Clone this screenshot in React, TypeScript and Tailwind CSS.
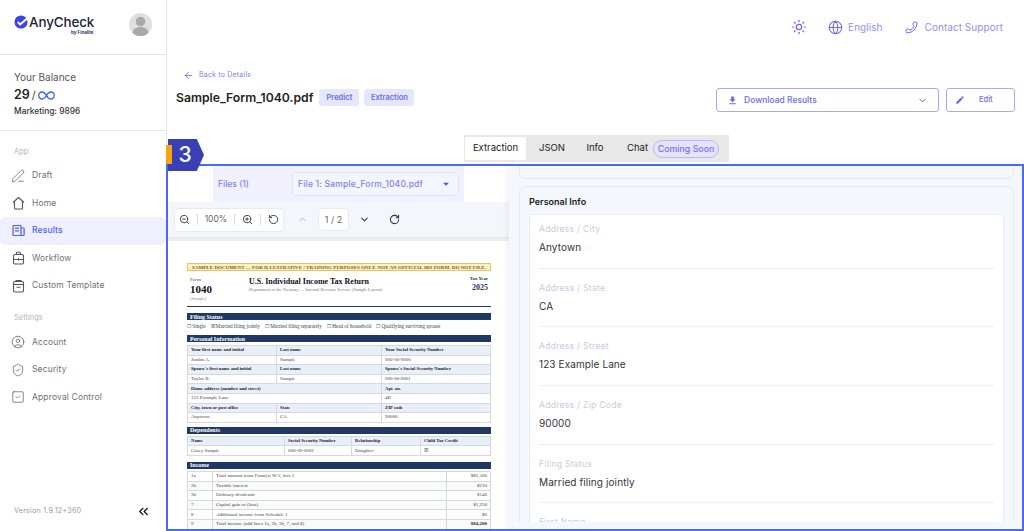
import React from "react";
import { PenLine, CircleUser, ShieldCheck, SquareCheck, Sun, Globe, Phone, ArrowLeft, ChevronDown, ChevronUp, ZoomIn, ZoomOut, RotateCcw, RotateCw, ChevronsLeft } from "lucide-react";
import { MdFileDownload, MdEdit, MdArrowDropDown } from "react-icons/md";

function ResultsIcon() {
  return (
    <svg width="13" height="13" viewBox="0 0 13 13" fill="none" stroke="#4f5cf5" strokeWidth="1.2">
      <rect x="1" y="1.500" width="8" height="10" rx="0.800" />
      <path d="M9 4h2.300a.8.8 0 0 1 .8.8v5.900a.8.8 0 0 1-.8.8H9" />
      <path d="M3 4.200h4M3 6.800h4" />
    </svg>
  );
}
function HomeIcon() {
  return (
    <svg width="13" height="14" viewBox="0 0 13 14" fill="none" stroke="#555" strokeWidth="1.100" strokeLinejoin="round">
      <path d="M1 6.500 6.500 1.500 12 6.500M2.500 5.500v6.700a.8.8 0 0 0 .8.8h6.400a.8.8 0 0 0 .8-.8V5.500" />
    </svg>
  );
}
function WorkflowIcon() {
  return (
    <svg width="13" height="14" viewBox="0 0 13 14" fill="none" stroke="#555" strokeWidth="1.100">
      <rect x="1.500" y="3.500" width="10" height="9.500" rx="1.500" />
      <path d="M4.500 3.500V2.200a1 1 0 0 1 1-1h2a1 1 0 0 1 1 1v1.300M1.500 8.500h10M6.500 7v2.500" />
    </svg>
  );
}
function TemplateIcon() {
  return (
    <svg width="13" height="14" viewBox="0 0 13 14" fill="none" stroke="#555" strokeWidth="1.100">
      <rect x="1.500" y="2.500" width="10" height="10.500" rx="1.500" />
      <path d="M1.500 5.500h10M4 2.500V1.500h5v1M4.500 8.200h4" />
    </svg>
  );
}

function NavItem({ icon, label, active }: { icon: React.ReactNode; label: string; active?: boolean }) {
  return (
    <div className={"flex h-[27.500px] items-center gap-[7px] pl-[11px] text-[8.500px] tracking-[0.15px] " + (active ? "rounded-md bg-[#eeefff] font-medium text-[#4f5cf5]" : "text-[#6f6f6f]")}>
      <span className="flex w-[14px] justify-center">{icon}</span>
      <span>{label}</span>
    </div>
  );
}

function Sidebar() {
  const ic = { size: 14, color: "#555", strokeWidth: 1.200 };
  return (
    <aside className="flex h-full w-[167px] shrink-0 flex-col border-r border-[#e2e6ec] bg-white">
      <div className="flex h-[55px] shrink-0 items-start justify-between border-b border-[#e2e6ec] pl-[14px] pr-[14px] pt-[13px]">
        <div className="relative flex h-[26px] items-start gap-[1px]">
          <svg width="14" height="14" viewBox="0 0 16 16" className="mt-[2px]">
            <circle cx="8" cy="8" r="7.500" fill="#3d45e8" />
            <path d="M4.200 8l2.800 2.800L15 4" fill="none" stroke="#fff" strokeWidth="2.200" />
          </svg>
          <span className="text-[13.400px] font-medium leading-[18px] tracking-[-0.1px] text-[#1d2433]">AnyCheck</span>
          <span className="absolute left-[57px] top-[17px] whitespace-nowrap text-[4.500px] font-bold leading-[6px] text-[#28366b]">by Finalite</span>
        </div>
        <div className="flex h-[23px] w-[23px] items-end justify-center overflow-hidden rounded-full bg-[#e0e0e0]">
          <svg width="23" height="23" viewBox="0 0 23 23" fill="#a9a9a9">
            <circle cx="11.500" cy="8.500" r="4.800" />
            <path d="M3.500 21c0-5 3.500-7 8-7s8 2 8 7v2h-16z" />
          </svg>
        </div>
      </div>
      <div className="h-[76px] shrink-0 border-b border-[#e2e6ec] pl-[14px] pt-[15px]">
        <div className="text-[10px] leading-[14px] text-[#555]">Your Balance</div>
        <div className="mt-[3px] flex h-[16px] items-center gap-[2px]">
          <span className="text-[12.500px] font-semibold text-[#1d1d1d]">29</span>
          <span className="text-[11px] text-[#444]">/</span>
          <svg width="17" height="9" viewBox="0 0 17 9" fill="none" stroke="#3d5bf5" strokeWidth="1.300">
            <path d="M8.500 4.500C7 2 5.800 1 4.200 1a3.500 3.500 0 0 0 0 7C5.800 8 7 7 8.500 4.500S10.800 1 12.800 1a3.500 3.500 0 0 1 0 7c-2 0-3-1-4.300-3.500z" />
          </svg>
        </div>
        <div className="mt-[2px] text-[8.400px] font-medium leading-[12px] text-[#333]">Marketing: 9896</div>
      </div>
      <div className="flex flex-1 flex-col">
        <div className="h-[31px] pl-[14px] pt-[15px] text-[7.500px] leading-[12px] text-[#b5b5b5]">App</div>
        <div className="flex flex-col">
          <NavItem icon={<PenLine {...ic} />} label="Draft" />
          <NavItem icon={<HomeIcon />} label="Home" />
          <NavItem icon={<ResultsIcon />} label="Results" active />
          <NavItem icon={<WorkflowIcon />} label="Workflow" />
          <NavItem icon={<TemplateIcon />} label="Custom Template" />
        </div>
        <div className="mt-[12px] h-[12px] pl-[14px] text-[7.500px] leading-[12px] text-[#b5b5b5]">Settings</div>
        <div className="mt-[5px] flex flex-col">
          <NavItem icon={<CircleUser {...ic} />} label="Account" />
          <NavItem icon={<ShieldCheck {...ic} />} label="Security" />
          <NavItem icon={<SquareCheck {...ic} />} label="Approval Control" />
        </div>
        <div className="mt-auto flex h-[40px] items-center justify-between pl-[14px] pr-[15px]">
          <span className="text-[7.200px] tracking-[0.2px] text-[#9a9a9a]">Version 1.9.12+360</span>
          <ChevronsLeft size={15} color="#111" strokeWidth={2.200} />
        </div>
      </div>
    </aside>
  );
}

function TopBar() {
  return (
    <div className="flex h-[54px] shrink-0 items-center justify-end pr-[21px] text-[10px] tracking-[0.05px] text-[#8f8ff8]">
      <Sun size={16} color="#6a6af5" strokeWidth={1.800} />
      <div className="ml-[21px] flex items-center gap-[5px]"><Globe size={15} color="#6a6af5" strokeWidth={1.700} /><span>English</span></div>
      <div className="ml-[22px] flex items-center gap-[7px]"><Phone size={13} color="#6a6af5" strokeWidth={1.800} className="-scale-x-100" /><span>Contact Support</span></div>
    </div>
  );
}

function TitleRow() {
  return (
    <div className="flex h-[81px] shrink-0 flex-col pl-[9px] pr-[9px]">
      <div className="mt-[15px] flex h-[13px] items-center gap-[5px] pl-[7px] text-[7px] tracking-[0.2px] text-[#7f7ff6]">
        <ArrowLeft size={11} color="#6a6af5" strokeWidth={1.800} />
        <span>Back to Details</span>
      </div>
      <div className="mt-[6px] flex items-start justify-between">
        <div className="mt-[1px] flex h-[17px] items-center gap-[5px]">
          <span className="mr-[1px] text-[12.200px] font-semibold leading-[17px] text-[#222]">Sample_Form_1040.pdf</span>
          <span className="flex h-[17px] w-[40px] items-center justify-center rounded-[3px] bg-[#e6e7ff] text-[7.500px] font-semibold text-[#6a6af5]">Predict</span>
          <span className="flex h-[17px] w-[50px] items-center justify-center rounded-[3px] bg-[#e6e7ff] text-[7.500px] font-semibold text-[#6a6af5]">Extraction</span>
        </div>
        <div className="flex items-center gap-[7px]">
          <div className="flex h-[24px] w-[223px] items-center rounded-[3px] border border-[#a8a8fb] pl-[10px] pr-[10px] text-[8.500px] font-medium text-[#6a6af5]">
            <MdFileDownload size={11} color="#6a6af5" />
            <span className="ml-[6px] flex-1">Download Results</span>
            <ChevronDown size={11} color="#5050e0" strokeWidth={2} />
          </div>
          <div className="flex h-[24px] w-[69px] items-center rounded-[3px] border border-[#a8a8fb] pl-[8px] text-[7.500px] font-medium text-[#6a6af5]">
            <MdEdit size={10} color="#6a6af5" />
            <span className="ml-[14px]">Edit</span>
          </div>
        </div>
      </div>
    </div>
  );
}

function Tabs() {
  return (
    <div className="flex h-[31px] shrink-0 items-start justify-center pl-[2px]">
      <div className="flex h-[27px] w-[265px] items-center bg-[#e8e8e8] pl-[1px] text-[9.500px] text-[#222]">
        <div className="flex h-[23px] w-[61px] items-center justify-center rounded-[2px] bg-white">Extraction</div>
        <div className="flex w-[52px] justify-center">JSON</div>
        <div className="flex w-[34px] justify-center">Info</div>
        <div className="ml-[15px] flex items-center gap-[5px]">
          <span>Chat</span>
          <span className="flex h-[18px] w-[66px] items-center justify-center rounded-full border border-[#b8b8fb] bg-[#e4e4fb] text-[8.800px] font-medium text-[#7070f5]">Coming Soon</span>
        </div>
      </div>
    </div>
  );
}

const cell = "border border-[#d5d9df] px-[3px] align-middle h-[9.600px] leading-[8px]";

function Bar({ children }: { children: React.ReactNode }) {
  return <div className="flex h-[7px] items-center bg-[#1f3864] pl-[3px] text-[6px] font-bold leading-none text-white">{children}</div>;
}

function Pi({ a, b, c }: { a: string; b: string; c: string }) {
  return <tr className="bg-[#e9eff9] text-[4.700px] font-bold text-[#222]"><td className={cell}>{a}</td><td className={cell}>{b}</td><td className={cell}>{c}</td></tr>;
}
function Pv({ a, b, c }: { a: string; b: string; c: string }) {
  return <tr className="text-[#444]"><td className={cell}>{a}</td><td className={cell}>{b}</td><td className={cell}>{c}</td></tr>;
}

function PdfPage() {
  const income = [["1a", "Total amount from Form(s) W-2, box 1", "$82,500"], ["2b", "Taxable interest", "$210"], ["3b", "Ordinary dividends", "$140"], ["7", "Capital gain or (loss)", "$1,250"], ["8", "Additional income from Schedule 1", "$0"], ["9", "Total income (add lines 1a, 2b, 3b, 7, and 8)", "$84,200"]];
  return (
    <div className="flex-1 overflow-hidden bg-white pl-[19px] pr-[18px] pt-[22px] text-[5px] text-[#333] [font-family:'Liberation_Serif',serif]">
      <div className="flex h-[8px] items-center justify-center border border-[#e2c469] bg-[#fdf0c4] text-[5px] font-bold leading-none tracking-[0.05px] text-[#7a5b10]">SAMPLE DOCUMENT — FOR ILLUSTRATIVE / TRAINING PURPOSES ONLY. NOT AN OFFICIAL IRS FORM. DO NOT FILE.</div>
      <div className="mt-[5px] flex h-[31px] border-b-[1px] border-[#1f3864]">
        <div className="w-[62px] pl-[3px] pt-[1px] leading-none">
          <div className="text-[5px] text-[#444]">Form</div>
          <div className="mt-[2px] text-[11px] font-bold text-[#111]">1040</div>
          <div className="mt-[2px] text-[4.500px] text-[#888]">(Sample)</div>
        </div>
        <div className="flex-1 pt-[2px] leading-none">
          <div className="text-[8px] font-bold text-[#111]">U.S. Individual Income Tax Return</div>
          <div className="mt-[2px] text-[4.500px] text-[#777]">Department of the Treasury — Internal Revenue Service (Sample Layout)</div>
        </div>
        <div className="pr-[3px] pt-[1px] text-right leading-none">
          <div className="text-[4.800px] font-bold text-[#333]">Tax Year</div>
          <div className="mt-[2px] text-[8px] font-bold text-[#1f3864]">2025</div>
        </div>
      </div>
      <div className="mt-[6px]"><Bar>Filing Status</Bar></div>
      <div className="mt-[2px] flex h-[9px] items-center gap-[5px] text-[5.200px] text-[#444]">
        <span>☐ Single</span><span>☒ Married filing jointly</span><span>☐ Married filing separately</span><span>☐ Head of household</span><span>☐ Qualifying surviving spouse</span>
      </div>
      <div className="mt-[4px]"><Bar>Personal Information</Bar></div>
      <table className="mt-[3px] w-full table-fixed border-collapse text-[5px]">
        <colgroup><col className="w-[89px]" /><col className="w-[105px]" /><col /></colgroup>
        <tbody>
          <Pi a="Your first name and initial" b="Last name" c="Your Social Security Number" />
          <Pv a="Jordan A." b="Sample" c="000-00-0000" />
          <Pi a="Spouse's first name and initial" b="Last name" c="Spouse's Social Security Number" />
          <Pv a="Taylor B." b="Sample" c="000-00-0001" />
          <tr className="bg-[#e9eff9] text-[4.700px] font-bold text-[#222]"><td className={cell} colSpan={2}>Home address (number and street)</td><td className={cell}>Apt. no.</td></tr>
          <tr className="text-[#444]"><td className={cell} colSpan={2}>123 Example Lane</td><td className={cell}>4B</td></tr>
          <Pi a="City, town or post office" b="State" c="ZIP code" />
          <Pv a="Anytown" b="CA" c="90000" />
        </tbody>
      </table>
      <div className="mt-[4px]"><Bar>Dependents</Bar></div>
      <table className="mt-[2px] w-full table-fixed border-collapse text-[5px]">
        <colgroup><col className="w-[97px]" /><col className="w-[67px]" /><col className="w-[69px]" /><col /></colgroup>
        <tbody>
          <tr className="bg-[#e9eff9] text-[4.700px] font-bold text-[#222]"><td className={cell}>Name</td><td className={cell}>Social Security Number</td><td className={cell}>Relationship</td><td className={cell}>Child Tax Credit</td></tr>
          <tr className="text-[#444]"><td className={cell}>Casey Sample</td><td className={cell}>000-00-0002</td><td className={cell}>Daughter</td><td className={cell}>☒</td></tr>
        </tbody>
      </table>
      <div className="mt-[6px]"><Bar>Income</Bar></div>
      <table className="mt-[2px] w-full table-fixed border-collapse text-[5px]">
        <colgroup><col className="w-[25px]" /><col /><col className="w-[44px]" /></colgroup>
        <tbody>
          {income.map((r, i) => (
            <tr key={r[0]} className={"text-[#444] " + (i % 2 ? "bg-[#fafafa]" : "bg-white")}>
              <td className={cell}>{r[0]}</td>
              <td className={cell}>{r[1]}</td>
              <td className={cell + " text-right " + (i === 5 ? "font-bold text-[#222]" : "")}>{r[2]}</td>
            </tr>
          ))}
        </tbody>
      </table>
    </div>
  );
}

function LeftPanel() {
  const tb = { size: 11, color: "#333", strokeWidth: 2 };
  return (
    <div className="flex h-full w-[341px] shrink-0 flex-col overflow-hidden">
      <div className="flex h-[36px] shrink-0">
        <div className="ml-[45px] flex h-[36px] w-[251px] items-center bg-[#f1f1fe] pl-[5px] text-[8.500px] font-medium text-[#7f7ff6]">
          <span className="w-[74px]">Files (1)</span>
          <div className="flex h-[24px] w-[167px] items-center justify-between rounded-[3px] border border-[#dfe2fb] bg-[#f3f6fd] pl-[5px] pr-[5px] tracking-[0.2px]">
            <span>File 1: Sample_Form_1040.pdf</span>
            <MdArrowDropDown size={14} color="#5050e0" />
          </div>
        </div>
      </div>
      <div className="flex h-[36px] shrink-0 items-center border-b border-[#e5e7eb] bg-[#f4f6fb] pl-[6px]">
        <div className="flex h-[24px] w-[110px] items-center justify-around rounded-[4px] border border-[#e8eaef] bg-white text-[8.500px] text-[#666]">
          <ZoomOut {...tb} /><span className="h-[11px] w-px bg-[#ddd]" /><span>100%</span><span className="h-[11px] w-px bg-[#ddd]" /><ZoomIn {...tb} /><span className="h-[11px] w-px bg-[#ddd]" /><RotateCcw {...tb} />
        </div>
        <ChevronUp size={11} color="#aaa" strokeWidth={2} className="ml-[13px]" />
        <div className="ml-[10px] flex h-[23px] w-[31px] items-center justify-center rounded-[4px] border border-[#e8eaef] bg-white text-[9px] text-[#666]">1 / 2</div>
        <ChevronDown size={11} color="#333" strokeWidth={2.200} className="ml-[10px]" />
        <RotateCw size={11} color="#333" strokeWidth={2.200} className="ml-[19px]" />
      </div>
      <div className="h-[3px] shrink-0 bg-[#eeeeee]" />
      <PdfPage />
    </div>
  );
}

function Field({ label, value }: { label: string; value: string }) {
  return (
    <div className="mx-[9px] shrink-0 border-b border-[#eceef1] pb-[13.700px] pt-[14px] first:pt-[9px]">
      <div className="text-[8.500px] leading-[11px] tracking-[0.3px] text-[#c3cde0]">{label}</div>
      <div className="mt-[5px] text-[10px] leading-[14px] tracking-[0.1px] text-[#333]">{value}</div>
    </div>
  );
}

function RightPanel() {
  return (
    <div className="flex h-full min-w-0 flex-1 flex-col overflow-hidden bg-[#f4f7fb] pb-[7px] pl-[10px] pr-[9px] shadow-[-3px_0_5px_rgba(0,0,0,0.05)]">
      <div className="h-[13px] shrink-0 rounded-b-[6px] border border-t-0 border-[#e6eaf0]" />
      <div className="mt-[7px] flex min-h-0 flex-1 flex-col rounded-t-[6px] border border-b-0 border-[#e6eaf0] px-[9px]">
        <div className="flex h-[27px] shrink-0 items-center pt-[3px] text-[9px] font-semibold text-[#1c1c1c]">Personal Info</div>
        <div className="flex min-h-0 flex-1 flex-col overflow-hidden rounded-t-[4px] border border-b-0 border-[#e8ebf0] bg-white">
          <Field label="Address / City" value="Anytown" />
          <Field label="Address / State" value="CA" />
          <Field label="Address / Street" value="123 Example Lane" />
          <Field label="Address / Zip Code" value="90000" />
          <Field label="Filing Status" value="Married filing jointly" />
          <Field label="First Name" value="Jordan A." />
        </div>
      </div>
    </div>
  );
}

export default function App() {
  return (
    <div className="relative flex h-[531px] w-[1024px] overflow-hidden bg-white [font-family:Inter,sans-serif]">
      <Sidebar />
      <main className="flex h-full min-w-0 flex-1 flex-col">
        <TopBar />
        <TitleRow />
        <Tabs />
        <div className="flex min-h-0 flex-1 px-[1px] pb-[2px]">
          <LeftPanel />
          <RightPanel />
        </div>
      </main>
      <div className="pointer-events-none absolute left-[166px] top-[164px] h-[367px] w-[858px] border-2 border-[#4d68f5]" />
      <div className="absolute left-[168px] top-[139px] flex h-[32px] w-[36px] items-center justify-center bg-[#3a3fb5] pr-[2px] text-[21px] font-medium text-white [clip-path:polygon(0_0,80%_0,100%_50%,80%_100%,0_100%)]">3</div>
      <div className="absolute left-[166px] top-[145px] h-[19px] w-[6px] bg-[#f5a50d]" />
    </div>
  );
}
